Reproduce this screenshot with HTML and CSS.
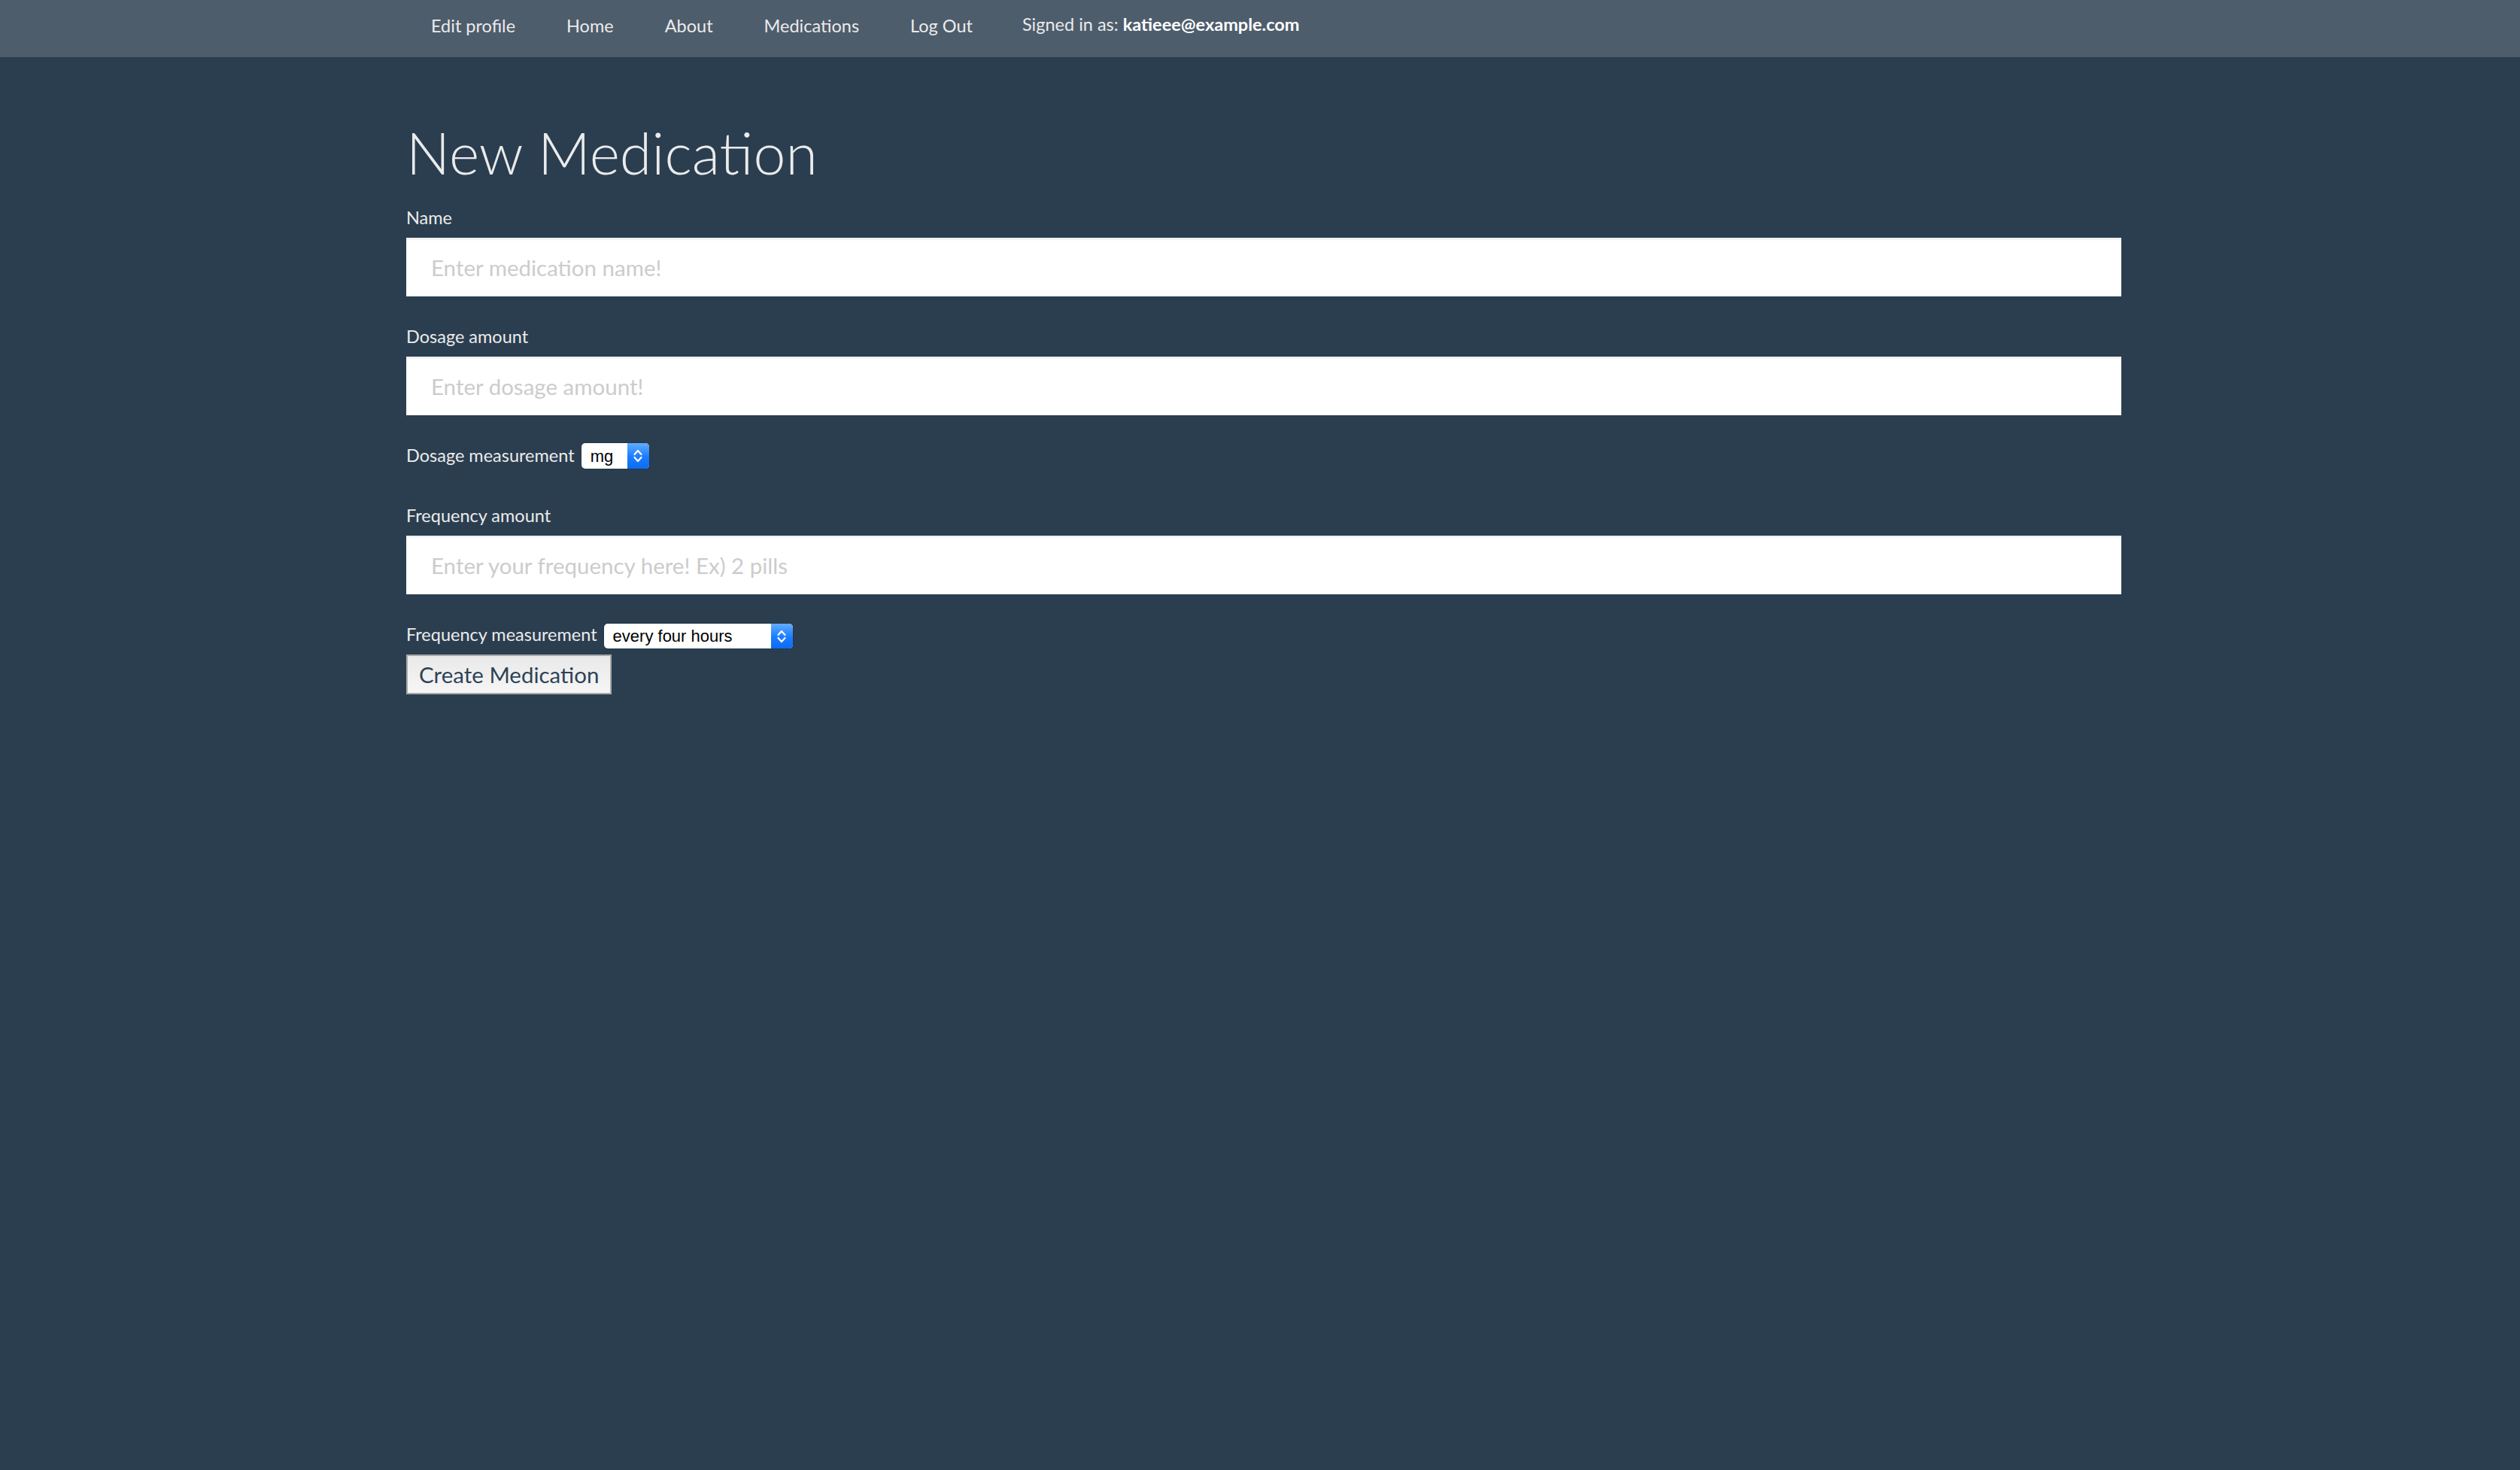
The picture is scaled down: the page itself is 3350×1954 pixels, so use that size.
FILE: index.html
```html
<!DOCTYPE html>
<html lang="en">
<head>
<meta charset="utf-8">
<title>New Medication</title>
<link rel="stylesheet" href="styles.css">
</head>
<body>
<nav class="topnav">
  <div class="container nav-inner">
    <a class="nav-link" href="#">Edit profile</a>
    <a class="nav-link" href="#">Home</a>
    <a class="nav-link" href="#">About</a>
    <a class="nav-link" href="#">Medications</a>
    <a class="nav-link" href="#">Log Out</a>
    <span class="nav-signed">Signed in as: <strong>katieee@example.com</strong></span>
  </div>
</nav>

<main class="container">
  <h1 class="page-title">New Medication</h1>
  <form class="med-form">
    <div class="form-group">
      <label class="field-label" for="name">Name</label>
      <input class="text-input" id="name" type="text" placeholder="Enter medication name!">
    </div>
    <div class="form-group">
      <label class="field-label" for="dose">Dosage amount</label>
      <input class="text-input" id="dose" type="text" placeholder="Enter dosage amount!">
    </div>
    <div class="form-group inline-group">
      <label class="field-label" for="dunit">Dosage measurement</label>
      <span class="mac-select sel-dose">
        <select id="dunit" class="mac-select-el"><option>mg</option></select>
        <span class="stepper">
          <svg class="stepper-icon" viewBox="0 0 14 22" width="14" height="22"><path d="M2.5 9 L7 4 L11.5 9 M2.5 13 L7 18 L11.5 13" fill="none" stroke="#fff" stroke-width="2.2" stroke-linecap="round" stroke-linejoin="round"/></svg>
        </span>
      </span>
    </div>
    <div class="form-group">
      <label class="field-label" for="freq">Frequency amount</label>
      <input class="text-input" id="freq" type="text" placeholder="Enter your frequency here! Ex) 2 pills">
    </div>
    <div class="form-group inline-group last-group">
      <label class="field-label" for="funit">Frequency measurement</label>
      <span class="mac-select sel-freq">
        <select id="funit" class="mac-select-el"><option>every four hours</option></select>
        <span class="stepper">
          <svg class="stepper-icon" viewBox="0 0 14 22" width="14" height="22"><path d="M2.5 9 L7 4 L11.5 9 M2.5 13 L7 18 L11.5 13" fill="none" stroke="#fff" stroke-width="2.2" stroke-linecap="round" stroke-linejoin="round"/></svg>
        </span>
      </span>
    </div>
    <button class="submit-btn" type="button">Create Medication</button>
  </form>
</main>
</body>
</html>
```

FILE: styles.css
```css
html, body {
  margin: 0;
  padding: 0;
}

body {
  background: #2b3e50;
  color: #ebebeb;
  font-family: Lato, "Open Sans", "Liberation Sans", sans-serif;
  font-size: 23.5px;
  min-height: 1954px;
}

.container {
  width: 2280px;
  margin: 0 auto;
  padding-left: 10px;
  box-sizing: content-box;
}

/* ---------- top navigation ---------- */
.topnav {
  background: #4e5d6c;
  height: 76px;
}

.nav-inner {
  display: flex;
  align-items: flex-start;
  height: 76px;
}

.nav-link {
  color: #ebebeb;
  text-decoration: none;
  font-size: 23.5px;
  line-height: 29px;
  padding: 20px 34px 0 34px;
}

.nav-link:first-child {
  padding-left: 33px;
}

.nav-signed {
  color: #ebebeb;
  font-size: 23.5px;
  line-height: 29px;
  padding: 18px 0 0 32px;
}

.nav-signed strong {
  font-weight: 700;
  color: #fff;
}

/* ---------- page ---------- */
.page-title {
  font-size: 77px;
  font-weight: 300;
  line-height: 86px;
  margin: 83px 0 27px 0;
  color: #ebebeb;
}

.med-form {
  display: flex;
  flex-direction: column;
  align-items: flex-start;
}

.form-group {
  display: flex;
  flex-direction: column;
  align-items: stretch;
  width: 100%;
  margin-bottom: 36px;
}

.field-label {
  font-size: 23.5px;
  line-height: 34px;
  margin-bottom: 10px;
  color: #ebebeb;
}

.text-input {
  box-sizing: border-box;
  height: 78px;
  width: 100%;
  border: 0;
  border-radius: 0;
  padding: 0 33px;
  background: #fff;
  box-shadow: inset 0 2px 3px rgba(0, 0, 0, 0.09);
  font-family: Lato, "Open Sans", "Liberation Sans", sans-serif;
  font-size: 29.5px;
  color: #2b3e50;
  outline: none;
}

.text-input::placeholder {
  color: #cccccc;
  opacity: 1;
}

.inline-group {
  flex-direction: row;
  align-items: flex-start;
  gap: 9px;
}

.last-group {
  margin-bottom: 0;
}

/* ---------- mac style select ---------- */
.mac-select {
  display: inline-flex;
  height: 34px;
  margin-top: 1px;
  border-radius: 5px;
  background: #fff;
  overflow: hidden;
  box-shadow: 0 0 0 0.5px rgba(0, 0, 0, 0.25);
}

.sel-dose { width: 90px; }
.sel-freq { width: 251px; margin-top: 3px; height: 33px; }

.mac-select-el {
  -webkit-appearance: none;
  appearance: none;
  flex: 1;
  min-width: 0;
  border: 0;
  margin: 0;
  background: transparent;
  padding: 0 0 0 12px;
  font-family: "Liberation Sans", Arial, sans-serif;
  font-size: 22px;
  color: #000;
  outline: none;
}

.stepper {
  width: 29px;
  flex: 0 0 29px;
  display: flex;
  align-items: center;
  justify-content: center;
  background: linear-gradient(#62adff, #1a7cff 55%, #0b6cf5);
}

.stepper-icon {
  display: block;
}

/* ---------- button ---------- */
.submit-btn {
  box-sizing: border-box;
  height: 53px;
  padding: 0 15px;
  border: 2px solid #a8a8a8;
  border-radius: 0;
  background: linear-gradient(#e9e9e9, #f6f6f6);
  font-family: Lato, "Open Sans", "Liberation Sans", sans-serif;
  font-size: 29.5px;
  color: #2e4356;
  cursor: pointer;
}
```
